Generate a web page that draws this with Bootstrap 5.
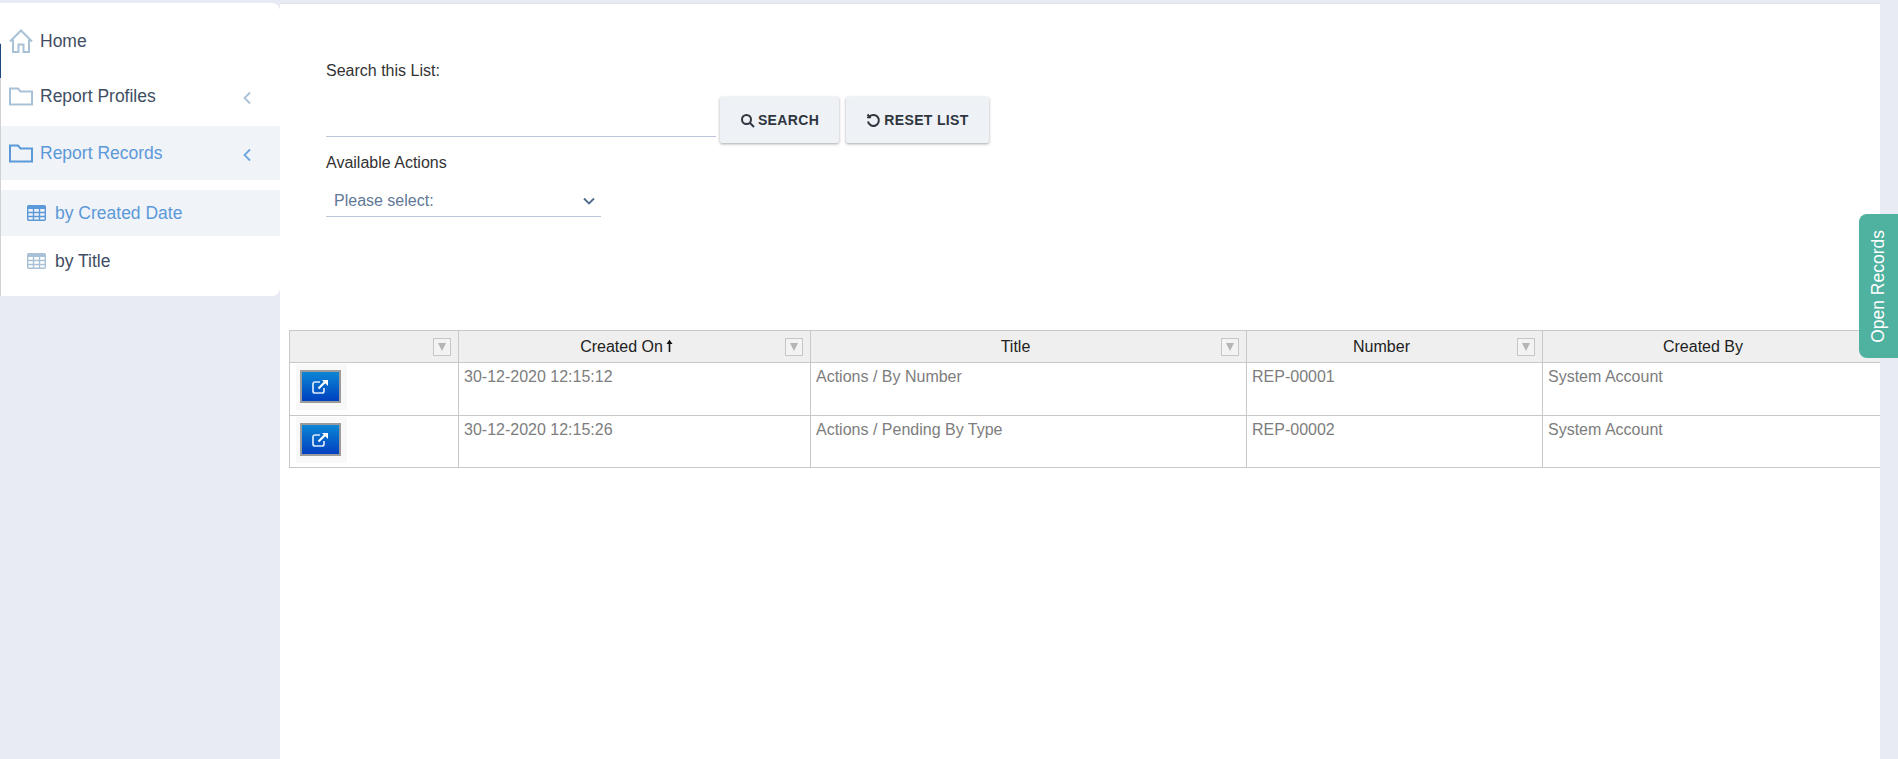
<!DOCTYPE html>
<html lang="en">
<head>
<meta charset="utf-8">
<title>Report Records</title>
<link href="https://cdn.jsdelivr.net/npm/bootstrap@5.3.0/dist/css/bootstrap.min.css" rel="stylesheet">
<style>
html,body{height:100%}
body{background:#e8ebf3;font-family:"Liberation Sans",Arial,sans-serif;overflow:hidden}
.shell{height:759px;padding-top:3px;position:relative}
.side{width:280px;flex:none}
.panel{background:#fff;height:293px;border-radius:0 8px 8px 0;padding-top:16px;position:relative}
.panel::before{content:"";position:absolute;left:0;top:40px;bottom:0;width:1px;background:#d2d2d2}
.panel::after{content:"";position:absolute;left:0;top:41px;height:34px;width:1px;background:#1c4a80}
.navi{display:flex;align-items:center;color:#3f4e63;font-size:17.5px;text-decoration:none;padding:0 0 0 9px;height:54px}
.navi svg{flex:none;margin-right:7px;color:#a9c1d6}
.navi .lbl{flex:1;padding-top:1px}
.navi .chev{margin:4px 28px 0 0;width:10px;height:14px}
.h-home{height:44px}
.h-prof{height:63px;padding-top:3px}
.navi.on{background:#f0f3f8;color:#5c99d8}
.navi.on svg{color:#5c99d8}
.navi.on .chev{color:#6ea5dc}
.sub{padding-left:27px;height:46px;margin-top:10px}
.sub.two{height:49px;margin-top:0}
.sub svg{margin-right:9px}
.workspace{flex:1;min-width:0;background:#fff;margin-right:18px;border-top:1px solid #dfe2ec;padding:0 0 0 9px;overflow:hidden}
.formzone{padding:57px 0 0 37px;height:326px;color:#333;font-size:16px}
.lab{line-height:20px;display:block;margin:0}
.searchrow{display:flex;align-items:flex-start;margin-top:16px}
.line-in{width:390px;height:40px;border:0;border-bottom:1px solid #bcc6d8;outline:0;background:transparent;margin-right:4px}
.act{background:#eef1f5;border:0;border-radius:2px;height:46px;font-weight:700;font-size:14px;color:#2f3640;box-shadow:0 1px 3px rgba(0,0,0,.35);display:inline-flex;align-items:center;justify-content:center;gap:3px;padding:0;text-transform:uppercase;letter-spacing:.35px}
.act-s{width:119px;margin-right:7px}
.act-r{width:143px}
.lab2{margin-top:10px}
.pick{width:275px;height:36px;margin-top:8px;border-bottom:1px solid #bcc6d8;display:flex;align-items:center;justify-content:space-between;padding:4px 6px 0 8px;color:#5f7896;font-size:16px}
.grid-w{overflow:hidden;width:100%}
.grid-t{table-layout:fixed;width:1600px;border-collapse:collapse;margin:0;font-size:16px;color:#7d7d7d}
.grid-t th,.grid-t td{border:1px solid #c8c8c8;padding:0}
.grid-t th{background:#efefef;height:32px;font-weight:400;color:#222;text-align:center;position:relative;padding-right:26px;vertical-align:middle}
.sortup{margin:-3px -11px 0 2px;vertical-align:middle}
.fbox{position:absolute;right:7px;top:7px;width:18px;height:18px;border:1px solid #c6c6c6;background:#f3f3f3;display:flex;align-items:center;justify-content:center}
.fbox::after{content:"";border-left:4px solid transparent;border-right:4px solid transparent;border-top:8px solid #b5b5b5}
.grid-t td{vertical-align:top;padding:3px 4px 0 5px;line-height:22px}
.grid-t tr.r1 td{height:53px}
.grid-t tr.r2 td{height:52px}
.grid-t td.tool{padding:1px 0 0 6px}
.toolbg{background:#f8f8f8;width:51px;height:46px;padding:6px 0 0 4px}
.goto{width:41px;height:33px;border:2px solid #9b9b9b;background:linear-gradient(#0c86d4,#0040c0);padding:0;display:flex;align-items:center;justify-content:center;border-radius:0}
.tabbie{position:absolute;right:0;top:214px;width:39px;height:144px;background:#4fb1a0;color:#fff;border-radius:8px 0 0 8px;font-size:17.5px;writing-mode:vertical-rl;display:flex;align-items:center;justify-content:center}
.tabbie span{transform:rotate(180deg)}
</style>
</head>
<body>
<div class="shell d-flex">
  <aside class="side">
    <div class="panel">
      <a class="navi h-home" href="#">
        <svg width="24" height="24" viewBox="0 0 24 24" fill="none" stroke="currentColor" stroke-width="2"><path d="M1 12.500 12 1.500l11 11"/><path d="M4 10.500V23h5.500v-7.500h5V23H20V10.500"/></svg>
        <span class="lbl">Home</span>
      </a>
      <a class="navi h-prof" href="#">
        <svg width="24" height="19" viewBox="0 0 24 19" fill="none" stroke="currentColor" stroke-width="2"><path d="M1 17.500V1.500h8l2.500 3H23v13z"/></svg>
        <span class="lbl">Report Profiles</span>
        <svg class="chev" viewBox="0 0 10 14" fill="none" stroke="currentColor" stroke-width="1.800"><path d="M8 1.500 2.500 7 8 12.500"/></svg>
      </a>
      <a class="navi on" href="#">
        <svg width="24" height="19" viewBox="0 0 24 19" fill="none" stroke="currentColor" stroke-width="2"><path d="M1 17.500V1.500h8l2.500 3H23v13z"/></svg>
        <span class="lbl">Report Records</span>
        <svg class="chev" viewBox="0 0 10 14" fill="none" stroke="currentColor" stroke-width="1.800"><path d="M8 1.500 2.500 7 8 12.500"/></svg>
      </a>
      <a class="navi on sub" href="#">
        <svg width="19" height="16" viewBox="0 0 19 16" fill="none" stroke="currentColor" stroke-width="1.400"><rect x=".7" y=".7" width="17.600" height="14.600" rx="1"/><path d="M.7 2.500h17.600" stroke-width="3"/><path d="M.7 7.500h17.600M.7 11.500h17.600M6.500 3v12.500M12.500 3v12.500"/></svg>
        <span class="lbl">by Created Date</span>
      </a>
      <a class="navi sub two" href="#">
        <svg width="19" height="16" viewBox="0 0 19 16" fill="none" stroke="currentColor" stroke-width="1.400"><rect x=".7" y=".7" width="17.600" height="14.600" rx="1"/><path d="M.7 2.500h17.600" stroke-width="3"/><path d="M.7 7.500h17.600M.7 11.500h17.600M6.500 3v12.500M12.500 3v12.500"/></svg>
        <span class="lbl">by Title</span>
      </a>
    </div>
  </aside>
  <main class="workspace">
    <div class="formzone">
      <label class="lab">Search this List:</label>
      <div class="searchrow">
        <input class="line-in" type="text" aria-label="Search">
        <button class="act act-s" type="button"><svg width="15" height="15" viewBox="0 0 15 15" fill="none" stroke="currentColor" stroke-width="2"><circle cx="6.500" cy="6.500" r="4.500"/><path d="m10 10 4 4"/></svg> Search</button>
        <button class="act act-r" type="button"><svg width="15" height="15" viewBox="0 0 15 15" fill="none" stroke="currentColor" stroke-width="2"><path d="M3.500 3.500A5.500 5.500 0 1 1 2 8.500"/><path d="M1.500 1.500 4 4.500"/><path d="M1 4.500h4" stroke-width="1.500"/></svg> Reset List</button>
      </div>
      <label class="lab lab2">Available Actions</label>
      <div class="pick"><span>Please select:</span><svg width="12" height="8" viewBox="0 0 12 8" fill="none" stroke="#4f6b8c" stroke-width="1.800"><path d="m1 1.500 5 5 5-5"/></svg></div>
    </div>
    <div class="grid-w">
      <table class="grid-t">
        <colgroup><col style="width:169px"><col style="width:352px"><col style="width:436px"><col style="width:296px"><col style="width:347px"></colgroup>
        <thead><tr>
          <th><span class="fbox"></span></th>
          <th>Created On<svg class="sortup" width="9" height="13" viewBox="0 0 9 13" fill="none" stroke="#111" stroke-width="1.600"><path d="M4.500 13V3"/><path d="M1.500 5 4.500 .8 7.500 5z" fill="#111" stroke="none"/></svg><span class="fbox"></span></th>
          <th>Title<span class="fbox"></span></th>
          <th>Number<span class="fbox"></span></th>
          <th>Created By<span class="fbox"></span></th>
        </tr></thead>
        <tbody>
          <tr class="r1"><td class="tool"><div class="toolbg"><button class="goto" type="button" aria-label="Open"><svg width="17" height="15" viewBox="0 0 17 15" fill="none" stroke="#dbe9fb" stroke-width="1.700"><path d="M8 3H3a2 2 0 0 0-2 2v7a2 2 0 0 0 2 2h7a2 2 0 0 0 2-2V9"/><path d="M6.500 9.500 14 2" stroke="#fff" stroke-width="2.200"/><path d="M10 1h6v6z" fill="#fff" stroke="none"/></svg></button></div></td><td>30-12-2020 12:15:12</td><td>Actions / By Number</td><td>REP-00001</td><td>System Account</td></tr>
          <tr class="r2"><td class="tool"><div class="toolbg"><button class="goto" type="button" aria-label="Open"><svg width="17" height="15" viewBox="0 0 17 15" fill="none" stroke="#dbe9fb" stroke-width="1.700"><path d="M8 3H3a2 2 0 0 0-2 2v7a2 2 0 0 0 2 2h7a2 2 0 0 0 2-2V9"/><path d="M6.500 9.500 14 2" stroke="#fff" stroke-width="2.200"/><path d="M10 1h6v6z" fill="#fff" stroke="none"/></svg></button></div></td><td>30-12-2020 12:15:26</td><td>Actions / Pending By Type</td><td>REP-00002</td><td>System Account</td></tr>
        </tbody>
      </table>
    </div>
  </main>
  <div class="tabbie"><span>Open Records</span></div>
</div>
<script src="https://cdn.jsdelivr.net/npm/bootstrap@5.3.0/dist/js/bootstrap.bundle.min.js"></script>
</body>
</html>
